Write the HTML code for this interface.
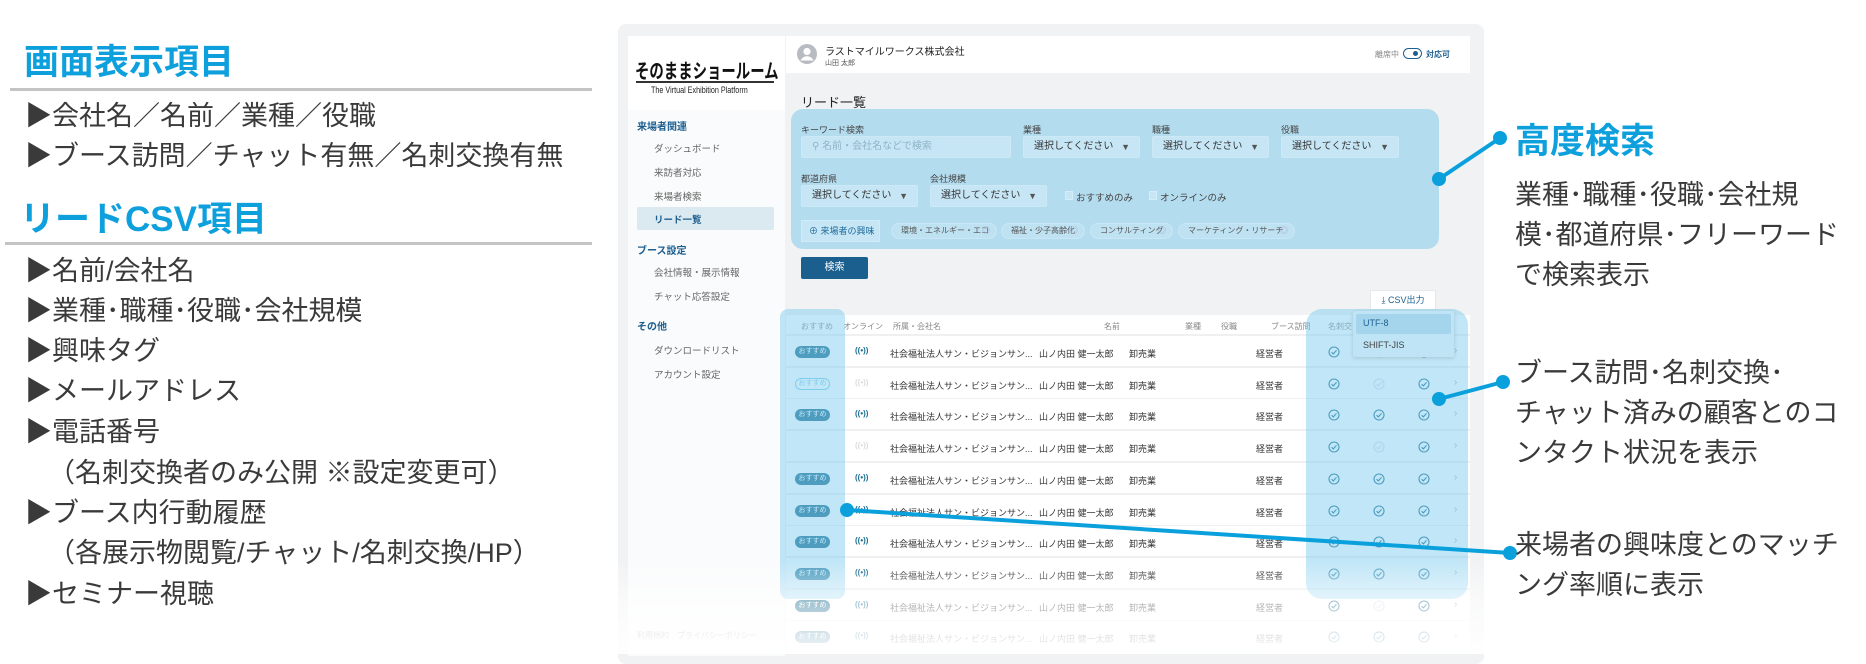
<!DOCTYPE html>
<html><head><meta charset="utf-8">
<style>
*{margin:0;padding:0;box-sizing:border-box}
body{width:1866px;height:654px;overflow:hidden;background:#fff;position:relative;font-family:"Liberation Sans","Noto Sans CJK JP",sans-serif;color:#333}
.a{position:absolute;white-space:nowrap}
.h{font-size:35px;font-weight:700;color:#0ea0dc;line-height:1}
.it{font-size:27px;color:#3a3a3a;line-height:1}
.rt{font-size:27px;color:#3a3a3a;line-height:40px;left:1515px}
.sb{font-size:9.5px;color:#666}
.sh{font-size:10px;font-weight:700;color:#1d5f8f}
.lb{font-size:9px;color:#444}
.sel{position:absolute;height:22px;background:#c6e6f6;border:1px solid #cde9f6;border-radius:2px;font-size:10px;color:#333;line-height:20px;padding-left:10px;white-space:nowrap}
.sel i{position:absolute;right:9px;top:0;font-style:normal;font-size:9px;color:#555}
.tag{position:absolute;top:223px;height:16px;border:1px solid #c9e7f6;background:#bfe2f3;border-radius:8px;font-size:8px;color:#555;line-height:14px;padding-left:9px;white-space:nowrap;overflow:hidden}
.tag b{position:absolute;right:6px;top:0;font-weight:400;color:#aac}
.row{position:absolute;left:786px;width:684px;height:32px;background:#fff;border-bottom:2px solid #eef0f2}
.t{position:absolute;font-size:9px;color:#333;top:11px;white-space:nowrap}
.bd{position:absolute;left:9px;top:10px;width:35px;height:12px;border-radius:6px;background:#1a6d8f;color:#fff;font-size:7px;text-align:center;line-height:12px}
.bd.o{background:none;border:1px solid #7ccde8;color:#7ccde8;line-height:10px}
.on{position:absolute;left:69px;top:10px;font-size:8px;color:#1a6d8f;font-weight:700}
.on.f{color:#ddd}
.ck{position:absolute;top:10px;width:12px;height:12px}
.chev{position:absolute;left:668px;top:9px;font-size:10px;color:#aaa}
</style></head><body>

<!-- left panel -->
<div class="a h" style="left:24px;top:45px">画面表示項目</div>
<div class="a" style="left:10px;top:88px;width:582px;height:3px;background:#c4c4c4"></div>
<div class="a it" style="left:25px;top:103px">▶会社名／名前／業種／役職</div>
<div class="a it" style="left:25px;top:143px">▶ブース訪問／チャット有無／名刺交換有無</div>
<div class="a h" style="left:20px;top:202px">リードCSV項目</div>
<div class="a" style="left:5px;top:242px;width:587px;height:3px;background:#c4c4c4"></div>
<div class="a it" style="left:25px;top:258px">▶名前/会社名</div>
<div class="a it" style="left:25px;top:298px">▶業種･職種･役職･会社規模</div>
<div class="a it" style="left:25px;top:338px">▶興味タグ</div>
<div class="a it" style="left:25px;top:378px">▶メールアドレス</div>
<div class="a it" style="left:25px;top:419px">▶電話番号</div>
<div class="a it" style="left:48px;top:460px">（名刺交換者のみ公開 ※設定変更可）</div>
<div class="a it" style="left:25px;top:500px">▶ブース内行動履歴</div>
<div class="a it" style="left:48px;top:540px">（各展示物閲覧/チャット/名刺交換/HP）</div>
<div class="a it" style="left:25px;top:581px">▶セミナー視聴</div>

<!-- frame -->
<div class="a" style="left:618px;top:24px;width:866px;height:640px;background:#f1f2f3;border-radius:8px"></div>
<div class="a" style="left:628px;top:36px;width:157px;height:620px;background:#fafbfc"></div>
<div class="a" style="left:628px;top:36px;width:157px;height:74px;background:#fff"></div>
<div class="a" style="left:635px;top:55px;font-size:20px;font-weight:700;color:#111;transform:scaleX(0.72);transform-origin:left">そのままショールーム</div>
<div class="a" style="left:636px;top:81px;width:138px;height:1.5px;background:#333"></div>
<div class="a" style="left:651px;top:85px;font-size:9px;color:#222;transform:scaleX(0.8);transform-origin:left">The Virtual Exhibition Platform</div>

<div class="a sh" style="left:637px;top:118px">来場者関連</div>
<div class="a sb" style="left:654px;top:141px">ダッシュボード</div>
<div class="a sb" style="left:654px;top:165px">来訪者対応</div>
<div class="a sb" style="left:654px;top:189px">来場者検索</div>
<div class="a" style="left:637px;top:207px;width:137px;height:23px;background:#dbe9f1;border-radius:2px"></div>
<div class="a sb" style="left:654px;top:212px;color:#1d5f8f;font-weight:700">リード一覧</div>
<div class="a sh" style="left:637px;top:242px">ブース設定</div>
<div class="a sb" style="left:654px;top:265px">会社情報・展示情報</div>
<div class="a sb" style="left:654px;top:289px">チャット応答設定</div>
<div class="a sh" style="left:637px;top:318px">その他</div>
<div class="a sb" style="left:654px;top:343px">ダウンロードリスト</div>
<div class="a sb" style="left:654px;top:367px">アカウント設定</div>
<div class="a sb" style="left:637px;top:630px;font-size:8px;color:#999">利用規約　プライバシーポリシー</div>

<!-- header -->
<div class="a" style="left:786px;top:36px;width:684px;height:37px;background:#fff"></div>
<svg class="a" style="left:796px;top:43px" width="22" height="22" viewBox="0 0 22 22"><circle cx="11" cy="11" r="10" fill="#b8bcc2"/><circle cx="11" cy="8.5" r="3.6" fill="#fff"/><path d="M4.5 17.5c1.5-3 4-4.3 6.5-4.3s5 1.3 6.5 4.3" fill="#fff"/></svg>
<div class="a" style="left:825px;top:43px;font-size:10px;color:#222">ラストマイルワークス株式会社</div>
<div class="a" style="left:825px;top:58px;font-size:7px;color:#555">山田 太郎</div>
<div class="a" style="left:1375px;top:49px;font-size:8px;color:#888">離席中</div>
<div class="a" style="left:1403px;top:48px;width:19px;height:11px;border:1.5px solid #1d5f8f;border-radius:6px"></div>
<div class="a" style="left:1413px;top:51px;width:5px;height:5px;border-radius:50%;background:#1d5f8f"></div>
<div class="a" style="left:1426px;top:49px;font-size:8px;font-weight:700;color:#1d5f8f">対応可</div>

<div class="a" style="left:801px;top:92px;font-size:13px;color:#222">リード一覧</div>

<!-- search box -->
<div class="a" style="left:791px;top:109px;width:648px;height:140px;background:#b4dcef;border-radius:12px"></div>
<div class="a lb" style="left:801px;top:123px">キーワード検索</div>
<div class="a lb" style="left:1023px;top:123px">業種</div>
<div class="a lb" style="left:1152px;top:123px">職種</div>
<div class="a lb" style="left:1281px;top:123px">役職</div>
<div class="sel" style="left:801px;top:136px;width:210px;color:#8fb3c5;padding-left:10px">⚲ 名前・会社名などで検索</div>
<div class="sel" style="left:1023px;top:136px;width:117px">選択してください<i>▼</i></div>
<div class="sel" style="left:1152px;top:136px;width:117px">選択してください<i>▼</i></div>
<div class="sel" style="left:1281px;top:136px;width:118px">選択してください<i>▼</i></div>
<div class="a lb" style="left:801px;top:172px">都道府県</div>
<div class="a lb" style="left:930px;top:172px">会社規模</div>
<div class="sel" style="left:801px;top:185px;width:117px">選択してください<i>▼</i></div>
<div class="sel" style="left:930px;top:185px;width:117px">選択してください<i>▼</i></div>
<div class="a" style="left:1065px;top:191px;width:8px;height:9px;background:#c6e6f6;border:1px solid #d5edf8"></div>
<div class="a" style="left:1076px;top:190px;font-size:9.5px;color:#444">おすすめのみ</div>
<div class="a" style="left:1149px;top:191px;width:8px;height:9px;background:#c6e6f6;border:1px solid #d5edf8"></div>
<div class="a" style="left:1160px;top:190px;font-size:9.5px;color:#444">オンラインのみ</div>
<div class="a" style="left:801px;top:220px;width:79px;height:22px;background:#c6e6f6;border:1px solid #d0eaf7;font-size:9px;color:#1d6a9a;line-height:20px;padding-left:7px">⊕ 来場者の興味</div>
<div class="tag" style="left:891px;width:106px">環境・エネルギー・エコ<b>◎</b></div>
<div class="tag" style="left:1001px;width:84px">福祉・少子高齢化<b>◎</b></div>
<div class="tag" style="left:1090px;width:83px">コンサルティング<b>◎</b></div>
<div class="tag" style="left:1178px;width:117px">マーケティング・リサーチ<b>◎</b></div>

<div class="a" style="left:801px;top:257px;width:67px;height:22px;background:#1a5f8e;border-radius:2px;color:#fff;font-size:10px;text-align:center;line-height:22px">検索</div>
<div class="a" style="left:1370px;top:290px;width:66px;height:20px;background:#fff;border:1px solid #e6e8ea;font-size:9px;color:#1d5f8f;text-align:center;line-height:18px">⤓ CSV出力</div>

<!-- table -->
<div class="a" style="left:786px;top:315px;width:684px;height:21px;background:#fff;border-bottom:2px solid #eef0f2"></div>
<div class="a" style="left:801px;top:321px;font-size:8px;color:#888">おすすめ</div>
<div class="a" style="left:843px;top:321px;font-size:8px;color:#888">オンライン</div>
<div class="a" style="left:893px;top:321px;font-size:8px;color:#888">所属・会社名</div>
<div class="a" style="left:1104px;top:321px;font-size:8px;color:#888">名前</div>
<div class="a" style="left:1185px;top:321px;font-size:8px;color:#888">業種</div>
<div class="a" style="left:1221px;top:321px;font-size:8px;color:#888">役職</div>
<div class="a" style="left:1271px;top:321px;font-size:8px;color:#888">ブース訪問</div>
<div class="a" style="left:1328px;top:321px;font-size:8px;color:#888">名刺交</div>

<div id="rows"></div>
<script>
(function(){
var st=[[1,1,1,0,0],[2,0,1,0,1],[1,1,1,1,1],[0,0,1,0,1],[1,1,1,1,1],[1,1,1,1,1],[1,1,1,1,1],[1,1,1,1,1],[1,0,1,0,1],[1,1,1,1,1]];
var h='';
function ck(x,f){var c=f?'#dde':'#1a6d8f';return '<svg class="ck" style="left:'+x+'px" viewBox="0 0 12 12"><circle cx="6" cy="6" r="5" fill="none" stroke="'+c+'" stroke-width="1.1"/><path d="M3.6 6.2l1.7 1.7 3.2-3.5" fill="none" stroke="'+c+'" stroke-width="1.1"/></svg>';}
for(var i=0;i<10;i++){var s=st[i];var ty=Math.round(336+i*31.7);
h+='<div class="row" style="top:'+ty+'px">';
if(s[0]==1)h+='<div class="bd">おすすめ</div>';else if(s[0]==2)h+='<div class="bd o">おすすめ</div>';
h+='<div class="on'+(s[0]==1?'':' f')+'">((•))</div>';
h+='<div class="t" style="left:104px">社会福祉法人サン・ビジョンサン...</div><div class="t" style="left:253px">山ノ内田 健一太郎</div><div class="t" style="left:343px">卸売業</div><div class="t" style="left:470px">経営者</div>';
h+=ck(542,0)+ck(587,!s[3])+ck(632,0)+'<div class="chev">›</div></div>';}
document.getElementById('rows').innerHTML=h;
})();
</script>

<!-- overlays -->
<div class="a" style="left:780px;top:309px;width:65px;height:290px;background:rgba(130,205,240,0.5);border-radius:8px"></div>
<div class="a" style="left:1306px;top:309px;width:162px;height:290px;background:rgba(130,205,240,0.5);border-radius:16px"></div>
<div class="a" style="left:1353px;top:311px;width:101px;height:46px;background:#bfe4f5;box-shadow:0 1px 4px rgba(0,0,0,0.15);border-radius:2px"></div>
<div class="a" style="left:1356px;top:314px;width:95px;height:20px;background:#a4d5ec;border-radius:2px"></div>
<div class="a" style="left:1363px;top:318px;font-size:9px;color:#1d5f8f">UTF-8</div>
<div class="a" style="left:1363px;top:340px;font-size:9px;color:#444">SHIFT-JIS</div>

<!-- bottom fade -->
<div class="a" style="left:610px;top:560px;width:890px;height:94px;background:linear-gradient(rgba(255,255,255,0),rgba(255,255,255,0.6) 45%,rgba(255,255,255,0.97))"></div>

<!-- connector lines -->
<svg class="a" style="left:0;top:0" width="1866" height="654">
<g stroke="#0aa0dc" stroke-width="4" fill="#0aa0dc">
<line x1="1439" y1="179" x2="1500" y2="138"/><circle cx="1439" cy="179" r="5"/><circle cx="1500" cy="138" r="5"/>
<line x1="1439" y1="399" x2="1503" y2="382"/><circle cx="1439" cy="399" r="5"/><circle cx="1503" cy="382" r="5"/>
<line x1="847" y1="510" x2="1510" y2="553"/><circle cx="847" cy="510" r="5"/><circle cx="1510" cy="553" r="5"/>
</g></svg>

<!-- right annotations -->
<div class="a h" style="left:1515px;top:124px">高度検索</div>
<div class="a rt" style="top:175px">業種･職種･役職･会社規<br>模･都道府県･フリーワード<br>で検索表示</div>
<div class="a rt" style="top:353px">ブース訪問･名刺交換･<br>チャット済みの顧客とのコ<br>ンタクト状況を表示</div>
<div class="a rt" style="top:525px">来場者の興味度とのマッチ<br>ング率順に表示</div>
</body></html>
